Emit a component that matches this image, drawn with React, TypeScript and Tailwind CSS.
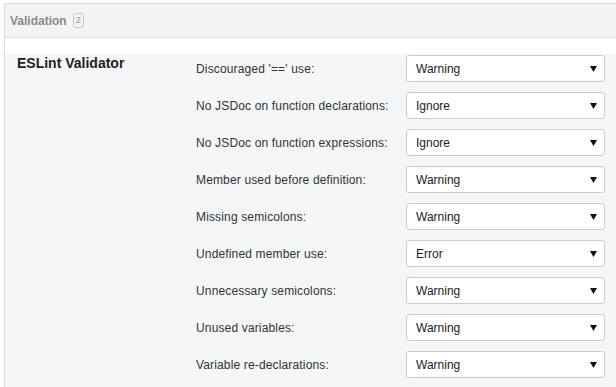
import React from "react";

const rows: [string, string][] = [
  ["Discouraged '==' use:", "Warning"],
  ["No JSDoc on function declarations:", "Ignore"],
  ["No JSDoc on function expressions:", "Ignore"],
  ["Member used before definition:", "Warning"],
  ["Missing semicolons:", "Warning"],
  ["Undefined member use:", "Error"],
  ["Unnecessary semicolons:", "Warning"],
  ["Unused variables:", "Warning"],
  ["Variable re-declarations:", "Warning"],
];

export default function App() {
  return (
    <div
      className="w-[616px] h-[387px] bg-white pt-[3px] pl-[4px] overflow-hidden"
      style={{ fontFamily: '"Liberation Sans", Arial, sans-serif' }}
    >
      <div className="h-full border-l border-t border-[#dcdcdc] flex flex-col">
        <div className="h-[34px] shrink-0 bg-[#f3f3f3] border-b border-[#dcdcdc] flex items-center pl-[5px]">
          <span className="text-[12px] font-bold text-[#8a8a8a]">Validation</span>
          <span className="ml-[6px] w-[11px] h-[15px] border border-[#c8c8c8] rounded-[3px] text-[9px] text-[#9a9a9a] flex items-center justify-center leading-none">
            2
          </span>
        </div>
        <div className="h-[16px] shrink-0 bg-white" />
        <div className="flex-1 bg-[#f5f6f8] flex">
          <div className="w-[191px] shrink-0 pl-[12px] pt-[1px]">
            <div className="text-[14px] leading-[16px] font-bold text-[#1e1e1e]">ESLint Validator</div>
          </div>
          <div className="flex flex-col gap-[10px] pt-[1px]">
            {rows.map(([label, value]) => (
              <div key={label} className="flex items-center h-[27px]">
                <div className="w-[210px] text-[12px] tracking-[0.15px] text-[#333]">{label}</div>
                <div className="w-[199px] h-[27px] bg-white border border-[#cccccc] rounded-[3px] flex items-center justify-between pl-[9px] pr-[7px]">
                  <span className="text-[12px] text-[#222]">{value}</span>
                  <svg width="7" height="7" viewBox="0 0 7 7">
                    <path d="M0 1 H7 L3.5 7 Z" fill="#111" />
                  </svg>
                </div>
              </div>
            ))}
          </div>
        </div>
      </div>
    </div>
  );
}
